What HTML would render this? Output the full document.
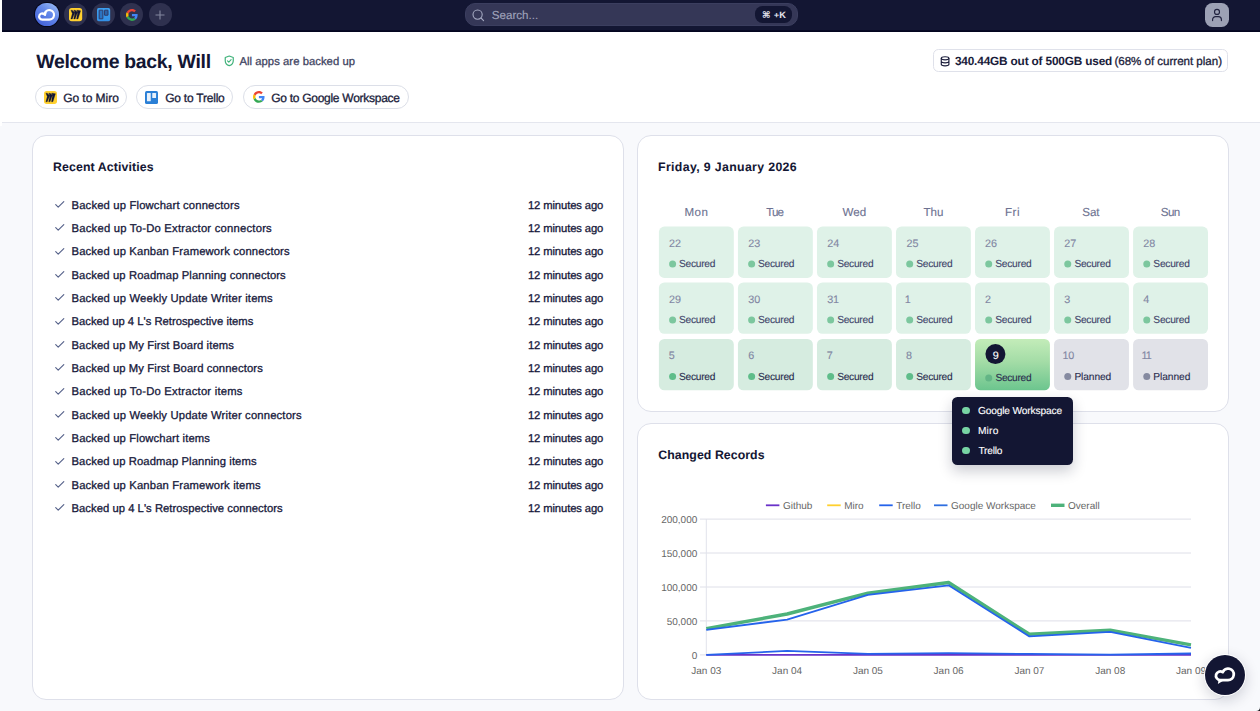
<!DOCTYPE html>
<html lang="en">
<head>
<meta charset="utf-8">
<title>Dashboard</title>
<style>
html,body{margin:0;padding:0}
body{text-rendering:geometricPrecision;width:1260px;height:711px;overflow:hidden;position:relative;background:#f8f9fc;font-family:"Liberation Sans",Arial,Helvetica,sans-serif;color:#1a1c3a}
*{box-sizing:border-box}
.abs{position:absolute}
.t{position:absolute;white-space:nowrap;display:block;-webkit-text-stroke:0.3px currentColor}
.t.b{-webkit-text-stroke:0.05px currentColor}
.t.l{-webkit-text-stroke:0.12px currentColor}
.topbar{position:absolute;left:2px;top:0;width:1258px;height:32px;background:linear-gradient(180deg,#131633 0,#131633 29.6px,#03051f 30.8px,#03051f 32px)}
.header{position:absolute;left:0;top:32px;width:1260px;height:91px;background:#fff;border-bottom:1px solid #e4e6ee}
.edge{position:absolute;left:0;top:0;width:2px;height:126px;background:#fff}
.ic{position:absolute;width:23.2px;height:23.2px;border-radius:50%;background:#2f314f;top:3px}
.card{position:absolute;background:#fff;border:1px solid #dee0ea;border-radius:14px}
.btn{position:absolute;top:85px;height:24px;border:1px solid #dcdfe8;border-radius:12px;background:#fff}
svg{position:absolute;overflow:visible}
</style>
</head>
<body>

<div class="topbar"></div>
<div class="ic" style="left:35.35px;top:2.85px;width:23.5px;height:23.5px;background:linear-gradient(215deg,#a3c4f8 0%,#6489ea 42%,#3d59d4 100%);box-shadow:0 0 0 1.1px #07081a"></div>
<div class="ic" style="left:63.8px"></div>
<div class="ic" style="left:92.0px"></div>
<div class="ic" style="left:120.2px"></div>
<div class="ic" style="left:148.6px"></div>
<svg style="left:35.35px;top:2.85px" width="23.5" height="23.5" viewBox="0 0 23.5 23.5"><path d="M9.9 11.7A3.15 3.15 0 1 0 7.3 16.65H14.25A4.8 4.8 0 1 0 9.74 10.21" fill="none" stroke="#fff" stroke-width="2.15" stroke-linecap="round" stroke-linejoin="round"/><path d="M7.8 11.0L10.3 12.1L10.9 9.5" fill="none" stroke="#fff" stroke-width="1.5" stroke-linecap="round" stroke-linejoin="round"/></svg>
<svg style="left:68.8px;top:8.0px" width="13.2" height="13.2" viewBox="0 0 24 24"><rect width="24" height="24" rx="5" fill="#ffd02f"/><path d="M16.4 4h-2.6l2.2 3.8L11.2 4H8.6l2.4 4.7L6 4H3.4l2.6 6-2.6 10H6l5-12.6L8.6 20h2.6l4.8-13.6L13.8 20h2.6l4.800-15z" fill="#131633" stroke="#131633" stroke-width="0.5" stroke-linejoin="round"/></svg>
<svg style="left:97.0px;top:8.0px" width="13.2" height="13.2" viewBox="0 0 24 24"><defs><linearGradient id="tg" x1="0" y1="0" x2="0" y2="1"><stop offset="0" stop-color="#3d9ff0"/><stop offset="1" stop-color="#3390e6"/></linearGradient></defs><rect width="24" height="24" rx="3" fill="url(#tg)"/><rect x="3.9" y="3.9" width="6.8" height="15.8" rx="0.6" fill="#2b72c0" stroke="#33284a" stroke-width="1.4"/><rect x="13.6" y="3.9" width="6.5" height="9.4" rx="0.6" fill="#2b62a8" stroke="#33284a" stroke-width="1.4"/></svg>
<svg style="left:126.2px;top:8.6px" width="11.9" height="11.9" viewBox="0 0 48 48"><path fill="#EA4335" d="M24 9.5c3.54 0 6.71 1.220 9.210 3.600l6.850-6.850C35.900 2.380 30.470 0 24 0 14.620 0 6.510 5.380 2.560 13.220l7.980 6.190C12.430 13.720 17.740 9.500 24 9.500z"/><path fill="#4285F4" d="M46.980 24.550c0-1.570-.150-3.090-.380-4.550H24v9.020h12.940c-.580 2.960-2.260 5.480-4.780 7.180l7.730 6c4.510-4.180 7.090-10.360 7.090-17.650z"/><path fill="#FBBC05" d="M10.530 28.590c-.480-1.450-.760-2.990-.760-4.590s.270-3.140.760-4.590l-7.980-6.190C.920 16.460 0 20.120 0 24c0 3.880.920 7.540 2.560 10.780l7.970-6.190z"/><path fill="#34A853" d="M24 48c6.480 0 11.930-2.130 15.890-5.810l-7.730-6c-2.150 1.450-4.920 2.300-8.160 2.300-6.260 0-11.570-4.220-13.470-9.910l-7.980 6.190C6.510 42.620 14.620 48 24 48z"/></svg>
<svg style="left:155.3px;top:9.7px" width="10" height="10" viewBox="0 0 10 10"><path d="M5 0.500V9.500M0.500 5H9.500" stroke="#8488a0" stroke-width="1.1" fill="none"/></svg>
<div class="abs" style="left:465px;top:3px;width:333.3px;height:23.3px;border-radius:10px;background:#353757;border:1px solid #3b3e5f"></div>
<svg style="left:472.2px;top:8.9px" width="13" height="13" viewBox="0 0 13 13"><circle cx="5.600" cy="5.600" r="4.600" fill="none" stroke="#a6aac2" stroke-width="1.100"/><path d="M9 9L11.600 11.600" stroke="#a6aac2" stroke-width="1.100" stroke-linecap="round"/></svg>
<span class="t l" id="search" style="left:491.78px;top:8.003px;font-size:11.6px;line-height:15px;font-weight:400;color:#a0a3bb;letter-spacing:-0.006px;">Search...</span>
<div class="abs" style="left:754.9px;top:6.2px;width:37px;height:16.5px;border-radius:7.5px;background:#131633"></div>
<span class="t b" id="kbd1" style="left:762.02px;top:10.004px;font-size:9.2px;line-height:12px;font-weight:700;color:#e4e5ee;letter-spacing:0px;font-family:'DejaVu Sans',sans-serif;">⌘</span>
<span class="t b" id="kbd2" style="left:773.92px;top:10.008px;font-size:8.6px;line-height:11px;font-weight:700;color:#e4e5ee;letter-spacing:0px;">+</span>
<span class="t b" id="kbd3" style="left:779.14px;top:9.004px;font-size:9.2px;line-height:12px;font-weight:700;color:#e4e5ee;letter-spacing:0px;">K</span>
<div class="abs" style="left:1204.9px;top:2.9px;width:23.7px;height:23.7px;border-radius:7.5px;background:#9ca1b5"></div>
<svg style="left:1211px;top:8px" width="12" height="14" viewBox="0 0 12 14"><circle cx="6" cy="3.900" r="2.500" fill="none" stroke="#20223f" stroke-width="1.150"/><path d="M1.600 12.600V11.600A3 3 0 0 1 4.600 8.600H7.400A3 3 0 0 1 10.400 11.600V12.600" fill="none" stroke="#20223f" stroke-width="1.150" stroke-linecap="round"/></svg>
<div class="header"></div><div class="edge"></div>
<span class="t b" id="welcome" style="left:36.31px;top:50.012px;font-size:19.4px;line-height:25px;font-weight:700;color:#131633;letter-spacing:-0.274px;">Welcome back, Will</span>
<svg style="left:224.3px;top:54.5px" width="10.500" height="11.700" viewBox="0 0 22 24.500"><path d="M11 2.200L19.400 5.300V11.800C19.400 16.800 16 20.600 11 22.300C6 20.600 2.600 16.800 2.600 11.800V5.300Z" fill="none" stroke="#3fb27a" stroke-width="2.500" stroke-linejoin="round"/><path d="M7.300 12.200L10.100 14.900L14.900 9.700" fill="none" stroke="#3fb27a" stroke-width="2.300" stroke-linecap="round" stroke-linejoin="round"/></svg>
<span class="t" id="allapps" style="left:239.4px;top:55.008px;font-size:11.25px;line-height:15px;font-weight:400;color:#3f4562;letter-spacing:0.054px;">All apps are backed up</span>
<div class="abs" style="left:933.4px;top:49.4px;width:294.8px;height:22.2px;border-radius:5.5px;border:1px solid #dfe1ea;background:#fff"></div>
<svg style="left:940.2px;top:55.500px" width="10.200" height="10.600" viewBox="0 0 22 23"><ellipse cx="11" cy="5" rx="8.300" ry="3.300" fill="none" stroke="#1a1c3a" stroke-width="2.500"/><path d="M2.700 5V18C2.700 19.800 6.400 21.300 11 21.300S19.300 19.800 19.300 18V5M2.700 11.500C2.700 13.300 6.400 14.800 11 14.800S19.300 13.300 19.300 11.500" fill="none" stroke="#1a1c3a" stroke-width="2.500"/></svg>
<span class="t b" id="stor1" style="left:954.9px;top:54.007px;font-size:11.8px;line-height:15px;font-weight:700;color:#1a1c3a;letter-spacing:-0.155px;">340.44GB out of 500GB used</span>
<span class="t" id="stor2" style="left:1114.48px;top:54.003px;font-size:11.6px;line-height:15px;font-weight:400;color:#1a1c3a;letter-spacing:-0.037px;">(68% of current plan)</span>
<div class="btn" style="left:35px;width:92px"></div>
<svg style="left:43.8px;top:90.6px" width="13" height="13" viewBox="0 0 24 24"><rect width="24" height="24" rx="5" fill="#ffd02f"/><path d="M16.4 4h-2.6l2.2 3.8L11.2 4H8.6l2.4 4.7L6 4H3.4l2.6 6-2.6 10H6l5-12.6L8.6 20h2.6l4.8-13.6L13.8 20h2.6l4.800-15z" fill="#131633" stroke="#131633" stroke-width="0.5" stroke-linejoin="round"/></svg>
<span class="t" id="b1" style="left:63.14px;top:90.011px;font-size:12.0px;line-height:16px;font-weight:400;color:#1a1c3a;letter-spacing:-0.037px;">Go to Miro</span>
<div class="btn" style="left:136px;width:97px"></div>
<svg style="left:145.0px;top:90.6px" width="13" height="13" viewBox="0 0 24 24"><rect width="24" height="24" rx="3" fill="#2a7fd6"/><rect x="3.6" y="3.6" width="7" height="15.5" rx="1" fill="#e8f1fb"/><rect x="13.4" y="3.6" width="7" height="9.5" rx="1" fill="#e8f1fb"/></svg>
<span class="t" id="b2" style="left:165.14px;top:90.011px;font-size:12.0px;line-height:16px;font-weight:400;color:#1a1c3a;letter-spacing:-0.214px;">Go to Trello</span>
<div class="btn" style="left:243px;width:166px"></div>
<svg style="left:252.9px;top:91.2px" width="11.8" height="11.8" viewBox="0 0 48 48"><path fill="#EA4335" d="M24 9.5c3.54 0 6.71 1.220 9.210 3.600l6.850-6.850C35.900 2.380 30.470 0 24 0 14.620 0 6.510 5.380 2.560 13.220l7.980 6.190C12.430 13.720 17.740 9.500 24 9.500z"/><path fill="#4285F4" d="M46.980 24.550c0-1.570-.150-3.090-.380-4.550H24v9.020h12.940c-.580 2.960-2.260 5.480-4.780 7.180l7.730 6c4.510-4.180 7.090-10.360 7.090-17.650z"/><path fill="#FBBC05" d="M10.530 28.590c-.480-1.450-.760-2.990-.760-4.590s.270-3.140.760-4.590l-7.980-6.190C.920 16.460 0 20.120 0 24c0 3.880.920 7.540 2.560 10.780l7.970-6.190z"/><path fill="#34A853" d="M24 48c6.480 0 11.930-2.130 15.890-5.810l-7.730-6c-2.150 1.450-4.920 2.300-8.160 2.300-6.260 0-11.570-4.220-13.470-9.910l-7.980 6.190C6.510 42.620 14.620 48 24 48z"/></svg>
<span class="t" id="b3" style="left:271.14px;top:90.011px;font-size:12.0px;line-height:16px;font-weight:400;color:#1a1c3a;letter-spacing:-0.269px;">Go to Google Workspace</span>
<div class="card" style="left:32px;top:135px;width:592px;height:565px"></div>
<span class="t b" id="recent" style="left:53.08px;top:159.009px;font-size:12.3px;line-height:16px;font-weight:700;color:#131633;letter-spacing:0.114px;">Recent Activities</span>
<svg style="left:54.6px;top:200.90px" width="9.500" height="7" viewBox="0 0 9.500 7"><path d="M0.700 3.600L3.200 6.200L8.800 0.700" fill="none" stroke="#56628a" stroke-width="1.15" stroke-linecap="round" stroke-linejoin="round"/></svg>
<span class="t" id="li0" style="left:71.5px;top:199.008px;font-size:11.25px;line-height:15px;font-weight:400;color:#15173a;letter-spacing:0.166px;">Backed up Flowchart connectors</span>
<span class="t" id="tm0" style="left:527.91px;top:199.008px;font-size:11.25px;line-height:15px;font-weight:400;color:#15173a;letter-spacing:-0.112px;">12 minutes ago</span>
<svg style="left:54.6px;top:224.23px" width="9.500" height="7" viewBox="0 0 9.500 7"><path d="M0.700 3.600L3.200 6.200L8.800 0.700" fill="none" stroke="#56628a" stroke-width="1.15" stroke-linecap="round" stroke-linejoin="round"/></svg>
<span class="t" id="li1" style="left:71.5px;top:222.008px;font-size:11.25px;line-height:15px;font-weight:400;color:#15173a;letter-spacing:0.224px;">Backed up To-Do Extractor connectors</span>
<span class="t" id="tm1" style="left:527.91px;top:222.008px;font-size:11.25px;line-height:15px;font-weight:400;color:#15173a;letter-spacing:-0.112px;">12 minutes ago</span>
<svg style="left:54.6px;top:247.56px" width="9.500" height="7" viewBox="0 0 9.500 7"><path d="M0.700 3.600L3.200 6.200L8.800 0.700" fill="none" stroke="#56628a" stroke-width="1.15" stroke-linecap="round" stroke-linejoin="round"/></svg>
<span class="t" id="li2" style="left:71.5px;top:245.008px;font-size:11.25px;line-height:15px;font-weight:400;color:#15173a;letter-spacing:0.153px;">Backed up Kanban Framework connectors</span>
<span class="t" id="tm2" style="left:527.91px;top:245.008px;font-size:11.25px;line-height:15px;font-weight:400;color:#15173a;letter-spacing:-0.112px;">12 minutes ago</span>
<svg style="left:54.6px;top:270.89px" width="9.500" height="7" viewBox="0 0 9.500 7"><path d="M0.700 3.600L3.200 6.200L8.800 0.700" fill="none" stroke="#56628a" stroke-width="1.15" stroke-linecap="round" stroke-linejoin="round"/></svg>
<span class="t" id="li3" style="left:71.5px;top:269.008px;font-size:11.25px;line-height:15px;font-weight:400;color:#15173a;letter-spacing:0.114px;">Backed up Roadmap Planning connectors</span>
<span class="t" id="tm3" style="left:527.91px;top:269.008px;font-size:11.25px;line-height:15px;font-weight:400;color:#15173a;letter-spacing:-0.112px;">12 minutes ago</span>
<svg style="left:54.6px;top:294.22px" width="9.500" height="7" viewBox="0 0 9.500 7"><path d="M0.700 3.600L3.200 6.200L8.800 0.700" fill="none" stroke="#56628a" stroke-width="1.15" stroke-linecap="round" stroke-linejoin="round"/></svg>
<span class="t" id="li4" style="left:71.5px;top:292.008px;font-size:11.25px;line-height:15px;font-weight:400;color:#15173a;letter-spacing:0.17px;">Backed up Weekly Update Writer items</span>
<span class="t" id="tm4" style="left:527.91px;top:292.008px;font-size:11.25px;line-height:15px;font-weight:400;color:#15173a;letter-spacing:-0.112px;">12 minutes ago</span>
<svg style="left:54.6px;top:317.55px" width="9.500" height="7" viewBox="0 0 9.500 7"><path d="M0.700 3.600L3.200 6.200L8.800 0.700" fill="none" stroke="#56628a" stroke-width="1.15" stroke-linecap="round" stroke-linejoin="round"/></svg>
<span class="t" id="li5" style="left:71.5px;top:315.008px;font-size:11.25px;line-height:15px;font-weight:400;color:#15173a;letter-spacing:0.005px;">Backed up 4 L&#x27;s Retrospective items</span>
<span class="t" id="tm5" style="left:527.91px;top:315.008px;font-size:11.25px;line-height:15px;font-weight:400;color:#15173a;letter-spacing:-0.112px;">12 minutes ago</span>
<svg style="left:54.6px;top:340.88px" width="9.500" height="7" viewBox="0 0 9.500 7"><path d="M0.700 3.600L3.200 6.200L8.800 0.700" fill="none" stroke="#56628a" stroke-width="1.15" stroke-linecap="round" stroke-linejoin="round"/></svg>
<span class="t" id="li6" style="left:71.5px;top:339.008px;font-size:11.25px;line-height:15px;font-weight:400;color:#15173a;letter-spacing:0.101px;">Backed up My First Board items</span>
<span class="t" id="tm6" style="left:527.91px;top:339.008px;font-size:11.25px;line-height:15px;font-weight:400;color:#15173a;letter-spacing:-0.112px;">12 minutes ago</span>
<svg style="left:54.6px;top:364.21px" width="9.500" height="7" viewBox="0 0 9.500 7"><path d="M0.700 3.600L3.200 6.200L8.800 0.700" fill="none" stroke="#56628a" stroke-width="1.15" stroke-linecap="round" stroke-linejoin="round"/></svg>
<span class="t" id="li7" style="left:71.5px;top:362.008px;font-size:11.25px;line-height:15px;font-weight:400;color:#15173a;letter-spacing:0.108px;">Backed up My First Board connectors</span>
<span class="t" id="tm7" style="left:527.91px;top:362.008px;font-size:11.25px;line-height:15px;font-weight:400;color:#15173a;letter-spacing:-0.112px;">12 minutes ago</span>
<svg style="left:54.6px;top:387.54px" width="9.500" height="7" viewBox="0 0 9.500 7"><path d="M0.700 3.600L3.200 6.200L8.800 0.700" fill="none" stroke="#56628a" stroke-width="1.15" stroke-linecap="round" stroke-linejoin="round"/></svg>
<span class="t" id="li8" style="left:71.5px;top:385.008px;font-size:11.25px;line-height:15px;font-weight:400;color:#15173a;letter-spacing:0.224px;">Backed up To-Do Extractor items</span>
<span class="t" id="tm8" style="left:527.91px;top:385.008px;font-size:11.25px;line-height:15px;font-weight:400;color:#15173a;letter-spacing:-0.112px;">12 minutes ago</span>
<svg style="left:54.6px;top:410.87px" width="9.500" height="7" viewBox="0 0 9.500 7"><path d="M0.700 3.600L3.200 6.200L8.800 0.700" fill="none" stroke="#56628a" stroke-width="1.15" stroke-linecap="round" stroke-linejoin="round"/></svg>
<span class="t" id="li9" style="left:71.5px;top:409.008px;font-size:11.25px;line-height:15px;font-weight:400;color:#15173a;letter-spacing:0.167px;">Backed up Weekly Update Writer connectors</span>
<span class="t" id="tm9" style="left:527.91px;top:409.008px;font-size:11.25px;line-height:15px;font-weight:400;color:#15173a;letter-spacing:-0.112px;">12 minutes ago</span>
<svg style="left:54.6px;top:434.20px" width="9.500" height="7" viewBox="0 0 9.500 7"><path d="M0.700 3.600L3.200 6.200L8.800 0.700" fill="none" stroke="#56628a" stroke-width="1.15" stroke-linecap="round" stroke-linejoin="round"/></svg>
<span class="t" id="li10" style="left:71.5px;top:432.008px;font-size:11.25px;line-height:15px;font-weight:400;color:#15173a;letter-spacing:0.143px;">Backed up Flowchart items</span>
<span class="t" id="tm10" style="left:527.91px;top:432.008px;font-size:11.25px;line-height:15px;font-weight:400;color:#15173a;letter-spacing:-0.112px;">12 minutes ago</span>
<svg style="left:54.6px;top:457.53px" width="9.500" height="7" viewBox="0 0 9.500 7"><path d="M0.700 3.600L3.200 6.200L8.800 0.700" fill="none" stroke="#56628a" stroke-width="1.15" stroke-linecap="round" stroke-linejoin="round"/></svg>
<span class="t" id="li11" style="left:71.5px;top:455.008px;font-size:11.25px;line-height:15px;font-weight:400;color:#15173a;letter-spacing:0.099px;">Backed up Roadmap Planning items</span>
<span class="t" id="tm11" style="left:527.91px;top:455.008px;font-size:11.25px;line-height:15px;font-weight:400;color:#15173a;letter-spacing:-0.112px;">12 minutes ago</span>
<svg style="left:54.6px;top:480.86px" width="9.500" height="7" viewBox="0 0 9.500 7"><path d="M0.700 3.600L3.200 6.200L8.800 0.700" fill="none" stroke="#56628a" stroke-width="1.15" stroke-linecap="round" stroke-linejoin="round"/></svg>
<span class="t" id="li12" style="left:71.5px;top:479.008px;font-size:11.25px;line-height:15px;font-weight:400;color:#15173a;letter-spacing:0.151px;">Backed up Kanban Framework items</span>
<span class="t" id="tm12" style="left:527.91px;top:479.008px;font-size:11.25px;line-height:15px;font-weight:400;color:#15173a;letter-spacing:-0.112px;">12 minutes ago</span>
<svg style="left:54.6px;top:504.19px" width="9.500" height="7" viewBox="0 0 9.500 7"><path d="M0.700 3.600L3.200 6.200L8.800 0.700" fill="none" stroke="#56628a" stroke-width="1.15" stroke-linecap="round" stroke-linejoin="round"/></svg>
<span class="t" id="li13" style="left:71.5px;top:502.008px;font-size:11.25px;line-height:15px;font-weight:400;color:#15173a;letter-spacing:0.035px;">Backed up 4 L&#x27;s Retrospective connectors</span>
<span class="t" id="tm13" style="left:527.91px;top:502.008px;font-size:11.25px;line-height:15px;font-weight:400;color:#15173a;letter-spacing:-0.112px;">12 minutes ago</span>
<div class="card" style="left:637px;top:135px;width:592px;height:277px"></div>
<span class="t b" id="date" style="left:658.08px;top:159.009px;font-size:12.3px;line-height:16px;font-weight:700;color:#131633;letter-spacing:0.36px;">Friday, 9 January 2026</span>
<span class="t l" id="dn0" style="left:684.41px;top:205.003px;font-size:11.6px;line-height:15px;font-weight:400;color:#6d7291;letter-spacing:0.496px;">Mon</span>
<span class="t l" id="dn1" style="left:766.16px;top:205.003px;font-size:11.6px;line-height:15px;font-weight:400;color:#6d7291;letter-spacing:-0.858px;">Tue</span>
<span class="t l" id="dn2" style="left:842.4px;top:205.003px;font-size:11.6px;line-height:15px;font-weight:400;color:#6d7291;letter-spacing:0.089px;">Wed</span>
<span class="t l" id="dn3" style="left:923.56px;top:205.003px;font-size:11.6px;line-height:15px;font-weight:400;color:#6d7291;letter-spacing:-0.02px;">Thu</span>
<span class="t l" id="dn4" style="left:1004.93px;top:205.003px;font-size:11.6px;line-height:15px;font-weight:400;color:#6d7291;letter-spacing:0.555px;">Fri</span>
<span class="t l" id="dn5" style="left:1082.29px;top:205.003px;font-size:11.6px;line-height:15px;font-weight:400;color:#6d7291;letter-spacing:-0.048px;">Sat</span>
<span class="t l" id="dn6" style="left:1160.83px;top:205.003px;font-size:11.6px;line-height:15px;font-weight:400;color:#6d7291;letter-spacing:-0.677px;">Sun</span>
<svg style="left:0;top:0" width="1260" height="711" viewBox="0 0 1260 711"><defs><linearGradient id="tdg" x1="0" y1="0" x2="0" y2="1"><stop offset="0" stop-color="#c3ecb9"/><stop offset="0.45" stop-color="#a3dca6"/><stop offset="1" stop-color="#6cc58e"/></linearGradient></defs><rect x="658.90" y="226.60" width="74.9" height="51.3" rx="5.5" fill="#dff2e8"/><circle cx="672.60" cy="264.00" r="3.5" fill="#7cc79e"/><rect x="737.93" y="226.60" width="74.9" height="51.3" rx="5.5" fill="#dff2e8"/><circle cx="751.63" cy="264.00" r="3.5" fill="#7cc79e"/><rect x="816.96" y="226.60" width="74.9" height="51.3" rx="5.5" fill="#dff2e8"/><circle cx="830.66" cy="264.00" r="3.5" fill="#7cc79e"/><rect x="895.99" y="226.60" width="74.9" height="51.3" rx="5.5" fill="#dff2e8"/><circle cx="909.69" cy="264.00" r="3.5" fill="#7cc79e"/><rect x="975.02" y="226.60" width="74.9" height="51.3" rx="5.5" fill="#dff2e8"/><circle cx="988.72" cy="264.00" r="3.5" fill="#7cc79e"/><rect x="1054.05" y="226.60" width="74.9" height="51.3" rx="5.5" fill="#dff2e8"/><circle cx="1067.75" cy="264.00" r="3.5" fill="#7cc79e"/><rect x="1133.08" y="226.60" width="74.9" height="51.3" rx="5.5" fill="#dff2e8"/><circle cx="1146.78" cy="264.00" r="3.5" fill="#7cc79e"/><rect x="658.90" y="282.50" width="74.9" height="51.3" rx="5.5" fill="#dff2e8"/><circle cx="672.60" cy="319.90" r="3.5" fill="#7cc79e"/><rect x="737.93" y="282.50" width="74.9" height="51.3" rx="5.5" fill="#dff2e8"/><circle cx="751.63" cy="319.90" r="3.5" fill="#7cc79e"/><rect x="816.96" y="282.50" width="74.9" height="51.3" rx="5.5" fill="#dff2e8"/><circle cx="830.66" cy="319.90" r="3.5" fill="#7cc79e"/><rect x="895.99" y="282.50" width="74.9" height="51.3" rx="5.5" fill="#dff2e8"/><circle cx="909.69" cy="319.90" r="3.5" fill="#7cc79e"/><rect x="975.02" y="282.50" width="74.9" height="51.3" rx="5.5" fill="#dff2e8"/><circle cx="988.72" cy="319.90" r="3.5" fill="#7cc79e"/><rect x="1054.05" y="282.50" width="74.9" height="51.3" rx="5.5" fill="#dff2e8"/><circle cx="1067.75" cy="319.90" r="3.5" fill="#7cc79e"/><rect x="1133.08" y="282.50" width="74.9" height="51.3" rx="5.5" fill="#dff2e8"/><circle cx="1146.78" cy="319.90" r="3.5" fill="#7cc79e"/><rect x="658.90" y="339.00" width="74.9" height="51.3" rx="5.5" fill="#d6ece0"/><circle cx="672.60" cy="376.40" r="3.5" fill="#5fbd8a"/><rect x="737.93" y="339.00" width="74.9" height="51.3" rx="5.5" fill="#d6ece0"/><circle cx="751.63" cy="376.40" r="3.5" fill="#5fbd8a"/><rect x="816.96" y="339.00" width="74.9" height="51.3" rx="5.5" fill="#d6ece0"/><circle cx="830.66" cy="376.40" r="3.5" fill="#5fbd8a"/><rect x="895.99" y="339.00" width="74.9" height="51.3" rx="5.5" fill="#d6ece0"/><circle cx="909.69" cy="376.40" r="3.5" fill="#5fbd8a"/><rect x="975.02" y="339.00" width="74.9" height="51.3" rx="5.5" fill="url(#tdg)"/><circle cx="988.72" cy="377.90" r="3.5" fill="#63b586"/><circle cx="995.42" cy="354.10" r="10" fill="#131633"/><rect x="1054.05" y="339.00" width="74.9" height="51.3" rx="5.5" fill="#e1e2e8"/><circle cx="1067.75" cy="376.40" r="3.5" fill="#858aa0"/><rect x="1133.08" y="339.00" width="74.9" height="51.3" rx="5.5" fill="#e1e2e8"/><circle cx="1146.78" cy="376.40" r="3.5" fill="#858aa0"/></svg>
<span class="t l" id="st0_0" style="left:679.06px;top:258.008px;font-size:10.2px;line-height:13px;font-weight:400;color:#41456a;letter-spacing:-0.27px;">Secured</span>
<span class="t l" id="nm0_0" style="left:669.05px;top:237.004px;font-size:10.8px;line-height:14px;font-weight:400;color:#8287a3;letter-spacing:0px;letter-spacing:0px;">22</span>
<span class="t l" id="st0_1" style="left:758.07px;top:258.008px;font-size:10.2px;line-height:13px;font-weight:400;color:#41456a;letter-spacing:-0.25px;">Secured</span>
<span class="t l" id="nm0_1" style="left:748.18px;top:237.004px;font-size:10.8px;line-height:14px;font-weight:400;color:#8287a3;letter-spacing:0px;letter-spacing:0px;">23</span>
<span class="t l" id="st0_2" style="left:837.2px;top:258.008px;font-size:10.2px;line-height:13px;font-weight:400;color:#41456a;letter-spacing:-0.262px;">Secured</span>
<span class="t l" id="nm0_2" style="left:827.3px;top:237.004px;font-size:10.8px;line-height:14px;font-weight:400;color:#8287a3;letter-spacing:0px;letter-spacing:0px;">24</span>
<span class="t l" id="st0_3" style="left:916.22px;top:258.008px;font-size:10.2px;line-height:13px;font-weight:400;color:#41456a;letter-spacing:-0.25px;">Secured</span>
<span class="t l" id="nm0_3" style="left:906.39px;top:237.004px;font-size:10.8px;line-height:14px;font-weight:400;color:#8287a3;letter-spacing:0px;letter-spacing:0px;">25</span>
<span class="t l" id="st0_4" style="left:995.27px;top:258.008px;font-size:10.2px;line-height:13px;font-weight:400;color:#41456a;letter-spacing:-0.248px;">Secured</span>
<span class="t l" id="nm0_4" style="left:984.97px;top:237.004px;font-size:10.8px;line-height:14px;font-weight:400;color:#8287a3;letter-spacing:0px;letter-spacing:0px;">26</span>
<span class="t l" id="st0_5" style="left:1074.4px;top:258.008px;font-size:10.2px;line-height:13px;font-weight:400;color:#41456a;letter-spacing:-0.248px;">Secured</span>
<span class="t l" id="nm0_5" style="left:1064.15px;top:237.004px;font-size:10.8px;line-height:14px;font-weight:400;color:#8287a3;letter-spacing:0px;letter-spacing:0px;">27</span>
<span class="t l" id="st0_6" style="left:1153.33px;top:258.008px;font-size:10.2px;line-height:13px;font-weight:400;color:#41456a;letter-spacing:-0.231px;">Secured</span>
<span class="t l" id="nm0_6" style="left:1143.18px;top:237.004px;font-size:10.8px;line-height:14px;font-weight:400;color:#8287a3;letter-spacing:0px;letter-spacing:0px;">28</span>
<span class="t l" id="st1_0" style="left:679.06px;top:314.008px;font-size:10.2px;line-height:13px;font-weight:400;color:#41456a;letter-spacing:-0.27px;">Secured</span>
<span class="t l" id="nm1_0" style="left:669.05px;top:293.004px;font-size:10.8px;line-height:14px;font-weight:400;color:#8287a3;letter-spacing:0px;letter-spacing:0px;">29</span>
<span class="t l" id="st1_1" style="left:758.07px;top:314.008px;font-size:10.2px;line-height:13px;font-weight:400;color:#41456a;letter-spacing:-0.25px;">Secured</span>
<span class="t l" id="nm1_1" style="left:748.23px;top:293.004px;font-size:10.8px;line-height:14px;font-weight:400;color:#8287a3;letter-spacing:0px;letter-spacing:0px;">30</span>
<span class="t l" id="st1_2" style="left:837.2px;top:314.008px;font-size:10.2px;line-height:13px;font-weight:400;color:#41456a;letter-spacing:-0.262px;">Secured</span>
<span class="t l" id="nm1_2" style="left:827.36px;top:293.004px;font-size:10.8px;line-height:14px;font-weight:400;color:#8287a3;letter-spacing:0px;letter-spacing:-0.3px;">31</span>
<span class="t l" id="st1_3" style="left:916.22px;top:314.008px;font-size:10.2px;line-height:13px;font-weight:400;color:#41456a;letter-spacing:-0.25px;">Secured</span>
<span class="t l" id="nm1_3" style="left:904.78px;top:293.004px;font-size:10.8px;line-height:14px;font-weight:400;color:#8287a3;letter-spacing:0px;letter-spacing:0px;">1</span>
<span class="t l" id="st1_4" style="left:995.27px;top:314.008px;font-size:10.2px;line-height:13px;font-weight:400;color:#41456a;letter-spacing:-0.248px;">Secured</span>
<span class="t l" id="nm1_4" style="left:984.97px;top:293.004px;font-size:10.8px;line-height:14px;font-weight:400;color:#8287a3;letter-spacing:0px;letter-spacing:0px;">2</span>
<span class="t l" id="st1_5" style="left:1074.4px;top:314.008px;font-size:10.2px;line-height:13px;font-weight:400;color:#41456a;letter-spacing:-0.248px;">Secured</span>
<span class="t l" id="nm1_5" style="left:1064.2px;top:293.004px;font-size:10.8px;line-height:14px;font-weight:400;color:#8287a3;letter-spacing:0px;letter-spacing:0px;">3</span>
<span class="t l" id="st1_6" style="left:1153.33px;top:314.008px;font-size:10.2px;line-height:13px;font-weight:400;color:#41456a;letter-spacing:-0.231px;">Secured</span>
<span class="t l" id="nm1_6" style="left:1143.28px;top:293.004px;font-size:10.8px;line-height:14px;font-weight:400;color:#8287a3;letter-spacing:0px;letter-spacing:0px;">4</span>
<span class="t l" id="st2_0" style="left:679.07px;top:371.008px;font-size:10.2px;line-height:13px;font-weight:400;color:#2a2d4e;letter-spacing:-0.271px;">Secured</span>
<span class="t l" id="nm2_0" style="left:668.7px;top:349.004px;font-size:10.8px;line-height:14px;font-weight:400;color:#8287a3;letter-spacing:0px;letter-spacing:0px;">5</span>
<span class="t l" id="st2_1" style="left:758.07px;top:371.008px;font-size:10.2px;line-height:13px;font-weight:400;color:#2a2d4e;letter-spacing:-0.25px;">Secured</span>
<span class="t l" id="nm2_1" style="left:748.2px;top:349.004px;font-size:10.8px;line-height:14px;font-weight:400;color:#8287a3;letter-spacing:0px;letter-spacing:0px;">6</span>
<span class="t l" id="st2_2" style="left:837.2px;top:371.008px;font-size:10.2px;line-height:13px;font-weight:400;color:#2a2d4e;letter-spacing:-0.262px;">Secured</span>
<span class="t l" id="nm2_2" style="left:826.76px;top:349.004px;font-size:10.8px;line-height:14px;font-weight:400;color:#8287a3;letter-spacing:0px;letter-spacing:0px;">7</span>
<span class="t l" id="st2_3" style="left:916.22px;top:371.008px;font-size:10.2px;line-height:13px;font-weight:400;color:#2a2d4e;letter-spacing:-0.25px;">Secured</span>
<span class="t l" id="nm2_3" style="left:905.96px;top:349.004px;font-size:10.8px;line-height:14px;font-weight:400;color:#8287a3;letter-spacing:0px;letter-spacing:0px;">8</span>
<span class="t l" id="st2_4" style="left:995.45px;top:372.008px;font-size:10.2px;line-height:13px;font-weight:400;color:#2a2d4e;letter-spacing:-0.292px;">Secured</span>
<span class="t l" id="n9" style="left:992.67px;top:349.004px;font-size:10.8px;line-height:14px;font-weight:400;color:#fff;letter-spacing:0px;">9</span>
<span class="t l" id="st2_5" style="left:1074.4px;top:371.008px;font-size:10.2px;line-height:13px;font-weight:400;color:#2a2d4e;letter-spacing:-0.098px;">Planned</span>
<span class="t l" id="nm2_5" style="left:1062.51px;top:349.004px;font-size:10.8px;line-height:14px;font-weight:400;color:#8287a3;letter-spacing:0px;letter-spacing:-0.3px;">10</span>
<span class="t l" id="st2_6" style="left:1153.23px;top:371.008px;font-size:10.2px;line-height:13px;font-weight:400;color:#2a2d4e;letter-spacing:-0.051px;">Planned</span>
<span class="t l" id="nm2_6" style="left:1141.59px;top:349.004px;font-size:10.8px;line-height:14px;font-weight:400;color:#8287a3;letter-spacing:0px;letter-spacing:-1.0px;">11</span>
<div class="card" style="left:637px;top:423px;width:592px;height:277px"></div>
<span class="t b" id="changed" style="left:658.33px;top:447.009px;font-size:12.3px;line-height:16px;font-weight:700;color:#131633;letter-spacing:0.07px;">Changed Records</span>
<svg style="left:0;top:0" width="1260" height="711" viewBox="0 0 1260 711" font-family="Liberation Sans, Arial, sans-serif"><path d="M700 654.9H1191" stroke="#dedfe8" stroke-width="1"/><path d="M700 620.9H1191" stroke="#dedfe8" stroke-width="1"/><path d="M700 587.0H1191" stroke="#dedfe8" stroke-width="1"/><path d="M700 553.0H1191" stroke="#dedfe8" stroke-width="1"/><path d="M700 519.1H1191" stroke="#dedfe8" stroke-width="1"/><path d="M706.3 519V654.9" stroke="#e2e3ec" stroke-width="1"/><text x="697.3" y="658.6" font-size="10" fill="#666" text-anchor="end">0</text><text x="697.3" y="624.6" font-size="10" fill="#666" text-anchor="end">50,000</text><text x="697.3" y="590.7" font-size="10" fill="#666" text-anchor="end">100,000</text><text x="697.3" y="556.8" font-size="10" fill="#666" text-anchor="end">150,000</text><text x="697.3" y="522.8" font-size="10" fill="#666" text-anchor="end">200,000</text><text x="706.3" y="674.2" font-size="10" fill="#666" text-anchor="middle">Jan 03</text><text x="787.1" y="674.2" font-size="10" fill="#666" text-anchor="middle">Jan 04</text><text x="867.9" y="674.2" font-size="10" fill="#666" text-anchor="middle">Jan 05</text><text x="948.6" y="674.2" font-size="10" fill="#666" text-anchor="middle">Jan 06</text><text x="1029.4" y="674.2" font-size="10" fill="#666" text-anchor="middle">Jan 07</text><text x="1110.2" y="674.2" font-size="10" fill="#666" text-anchor="middle">Jan 08</text><text x="1191.0" y="674.2" font-size="10" fill="#666" text-anchor="middle">Jan 09</text><polyline points="706.3,654.9 787.1,654.9 867.9,654.9 948.6,654.9 1029.4,654.9 1110.2,654.9 1191.0,654.9" fill="none" stroke="#6a32c9" stroke-width="1.8"/><polyline points="706.3,654.9 787.1,654.9 867.9,654.9 948.6,654.9 1029.4,654.9 1110.2,654.9 1191.0,654.9" fill="none" stroke="#ffd02f" stroke-width="0"/><polyline points="706.3,628.7 787.1,614.0 867.9,593.2 948.6,582.5 1029.4,634.3 1110.2,630.2 1191.0,644.8" fill="none" stroke="#4db27a" stroke-width="3.4" stroke-linejoin="round"/><polyline points="706.3,654.9 787.1,650.9 867.9,653.9 948.6,653.2 1029.4,653.9 1110.2,654.6 1191.0,653.5" fill="none" stroke="#2563eb" stroke-width="1.8" stroke-linejoin="round"/><polyline points="706.3,629.8 787.1,619.6 867.9,594.8 948.6,585.3 1029.4,636.4 1110.2,631.8 1191.0,647.9" fill="none" stroke="#2563eb" stroke-width="1.8" stroke-linejoin="round"/><path d="M765.9 505.3H779.4" stroke="#6a32c9" stroke-width="1.8"/><text x="782.9" y="509" font-size="10" fill="#666">Github</text><path d="M827.2 505.3H840.7" stroke="#ffd02f" stroke-width="1.8"/><text x="844.2" y="509" font-size="10" fill="#666">Miro</text><path d="M879.2 505.3H892.7" stroke="#2563eb" stroke-width="1.8"/><text x="896.2" y="509" font-size="10" fill="#666">Trello</text><path d="M934.0 505.3H947.5" stroke="#2f6fe0" stroke-width="1.8"/><text x="951.0" y="509" font-size="10" fill="#666">Google Workspace</text><path d="M1051.0 505.3H1064.5" stroke="#4db27a" stroke-width="3.4"/><text x="1068.0" y="509" font-size="10" fill="#666">Overall</text></svg>
<div class="abs" style="left:952px;top:397px;width:121px;height:68px;border-radius:5.5px;background:#131633;box-shadow:0 6px 14px rgba(19,22,51,.22)"></div>
<div class="abs" style="left:962.4px;top:407.3px;width:7.2px;height:7.2px;border-radius:50%;background:#77d4a4"></div>
<span class="t l" id="tt0" style="left:977.92px;top:405.008px;font-size:10.2px;line-height:13px;font-weight:400;color:#fff;letter-spacing:-0.152px;">Google Workspace</span>
<div class="abs" style="left:962.4px;top:427.3px;width:7.2px;height:7.2px;border-radius:50%;background:#77d4a4"></div>
<span class="t l" id="tt1" style="left:977.92px;top:425.008px;font-size:10.2px;line-height:13px;font-weight:400;color:#fff;letter-spacing:0.198px;">Miro</span>
<div class="abs" style="left:962.4px;top:447.3px;width:7.2px;height:7.2px;border-radius:50%;background:#77d4a4"></div>
<span class="t l" id="tt2" style="left:978.4px;top:445.008px;font-size:10.2px;line-height:13px;font-weight:400;color:#fff;letter-spacing:-0.198px;">Trello</span>
<div class="abs" style="left:1204.3px;top:654.3px;width:42px;height:42px;border-radius:50%;background:#fff;box-shadow:0 4px 14px rgba(19,22,51,.18)"></div>
<div class="abs" style="left:1205.2px;top:655.2px;width:40.2px;height:40.2px;border-radius:50%;background:#131633"></div>
<svg style="left:1214px;top:666px" width="22" height="19" viewBox="0 0 22 19"><path d="M7 14.1H14A5.75 5.75 0 1 0 8.67 6.20A4.3 4.3 0 1 0 6.25 14.05Z" fill="none" stroke="#fff" stroke-width="2.75" stroke-linejoin="round"/><path d="M4.6 13.2L3.9 17.9L9.6 14.6Z" fill="#fff"/></svg>
<svg style="left:1256px;top:707px" width="4" height="4" viewBox="0 0 4 4"><path d="M4 0V4H0A4 4 0 0 0 4 0Z" fill="#14151c"/></svg>

</body>
</html>
